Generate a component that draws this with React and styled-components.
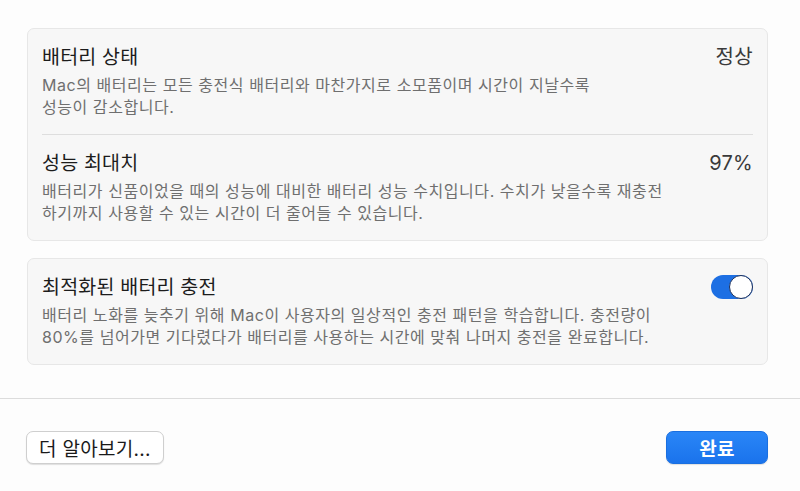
import React from "react";
import styled, { createGlobalStyle } from "styled-components";

const GlobalStyle = createGlobalStyle`
  html, body {
    margin: 0;
    padding: 0;
    background: #fdfdfd;
  }
  body {
    font-family: "Inter", "Noto Sans CJK KR", sans-serif;
    -webkit-font-smoothing: antialiased;
  }
`;

const Sheet = styled.div`
  width: 800px;
  height: 491px;
  display: flex;
  flex-direction: column;
  background: #fdfdfd;
  overflow: hidden;
`;

const Content = styled.div`
  display: flex;
  flex-direction: column;
  gap: 17px;
  padding: 28px 32px 33px 27px;
`;

const Card = styled.section`
  background: #f7f7f7;
  border: 1px solid #e7e7e7;
  border-radius: 7px;
  padding: 0 14px;
`;

const Row = styled.div`
  display: flex;
  align-items: flex-start;
  justify-content: space-between;
  padding: 16px 0 16px;
  &:not(:last-child) {
    border-bottom: 1px solid #dedede;
  }
`;

const Texts = styled.div`
  display: flex;
  flex-direction: column;
  gap: 5px;
`;

const Title = styled.div`
  font-size: 19.5px;
  line-height: 24px;
  letter-spacing: 0.2px;
  color: #1c1c1c;
`;

const Desc = styled.div`
  font-size: 16px;
  line-height: 22px;
  letter-spacing: 0.55px;
  color: #6f6f6f;
  span {
    display: block;
    white-space: nowrap;
  }
`;

const Value = styled.div`
  font-size: 20px;
  line-height: 24px;
  letter-spacing: 0.3px;
  color: #3a3a3a;
`;

const Toggle = styled.div`
  width: 42px;
  height: 24px;
  border-radius: 12px;
  background: ${p => (p.$on ? "#1d6fe3" : "#d0d0d0")};
  display: flex;
  align-items: center;
  justify-content: ${p => (p.$on ? "flex-end" : "flex-start")};
  box-sizing: border-box;
`;

const Knob = styled.div`
  width: 24px;
  height: 24px;
  border-radius: 50%;
  background: #fff;
  border: 1.5px solid #1c2f5a;
  box-sizing: border-box;
`;

const Footer = styled.div`
  border-top: 1px solid #dcdcdc;
  display: flex;
  justify-content: space-between;
  align-items: center;
  padding: 32px 32px 0 26px;
`;

const Button = styled.button`
  height: 33px;
  padding: 0 ${p => (p.$primary ? "0" : "12px")};
  width: ${p => (p.$primary ? "102px" : "auto")};
  border-radius: 7px;
  font-family: "Inter", "Noto Sans CJK KR", sans-serif;
  font-size: 19px;
  letter-spacing: 0.3px;
  font-weight: ${p => (p.$primary ? 700 : 400)};
  color: ${p => (p.$primary ? "#fff" : "#1a1a1a")};
  background: ${p => (p.$primary ? "linear-gradient(#2a86f7, #1a73ec)" : "#fff")};
  border: 1px solid ${p => (p.$primary ? "#1a6fe0" : "#cfcfcf")};
  box-shadow: 0 1px 1px rgba(0, 0, 0, 0.12);
  cursor: pointer;
`;

const rows = [
  {
    title: "배터리 상태",
    value: "정상",
    lines: [
      "Mac의 배터리는 모든 충전식 배터리와 마찬가지로 소모품이며 시간이 지날수록",
      "성능이 감소합니다.",
    ],
  },
  {
    title: "성능 최대치",
    value: "97%",
    lines: [
      "배터리가 신품이었을 때의 성능에 대비한 배터리 성능 수치입니다. 수치가 낮을수록 재충전",
      "하기까지 사용할 수 있는 시간이 더 줄어들 수 있습니다.",
    ],
  },
];

export default function App() {
  return (
    <Sheet>
      <GlobalStyle />
      <Content>
        <Card>
          {rows.map(r => (
            <Row key={r.title}>
              <Texts>
                <Title>{r.title}</Title>
                <Desc>
                  {r.lines.map(l => (
                    <span key={l}>{l}</span>
                  ))}
                </Desc>
              </Texts>
              <Value>{r.value}</Value>
            </Row>
          ))}
        </Card>
        <Card>
          <Row>
            <Texts>
              <Title>최적화된 배터리 충전</Title>
              <Desc>
                <span>배터리 노화를 늦추기 위해 Mac이 사용자의 일상적인 충전 패턴을 학습합니다. 충전량이</span>
                <span>80%를 넘어가면 기다렸다가 배터리를 사용하는 시간에 맞춰 나머지 충전을 완료합니다.</span>
              </Desc>
            </Texts>
            <Toggle $on>
              <Knob />
            </Toggle>
          </Row>
        </Card>
      </Content>
      <Footer>
        <Button>더 알아보기...</Button>
        <Button $primary>완료</Button>
      </Footer>
    </Sheet>
  );
}
